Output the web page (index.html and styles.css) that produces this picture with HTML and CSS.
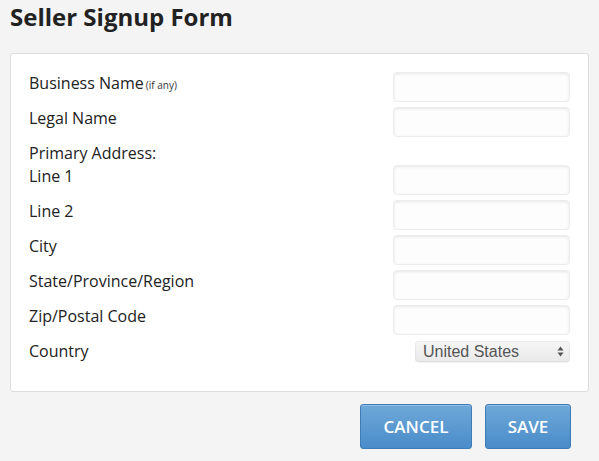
FILE: index.html
```html
<!DOCTYPE html>
<html>
<head>
<meta charset="utf-8">
<link rel="stylesheet" href="styles.css">
</head>
<body>
<h1 class="title">Seller Signup Form</h1>
<form class="panel">
  <div class="row">
    <label class="label">Business Name<small class="hint">(if any)</small></label>
    <input class="field" type="text">
  </div>
  <div class="row">
    <label class="label">Legal Name</label>
    <input class="field" type="text">
  </div>
  <div class="row row-heading">
    <span class="label">Primary Address:</span>
  </div>
  <div class="row">
    <label class="label">Line 1</label>
    <input class="field" type="text">
  </div>
  <div class="row">
    <label class="label">Line 2</label>
    <input class="field" type="text">
  </div>
  <div class="row">
    <label class="label">City</label>
    <input class="field" type="text">
  </div>
  <div class="row">
    <label class="label">State/Province/Region</label>
    <input class="field" type="text">
  </div>
  <div class="row">
    <label class="label">Zip/Postal Code</label>
    <input class="field" type="text">
  </div>
  <div class="row">
    <label class="label">Country</label>
    <div class="select">
      <span class="select-text">United States</span>
      <svg class="select-arrows" width="7" height="11" viewBox="0 0 7 11"><path d="M3.5 0.5 L6.5 4.5 L0.5 4.5 Z M0.5 6.5 L6.5 6.5 L3.5 10.5 Z" fill="#555"/></svg>
    </div>
  </div>
</form>
<div class="actions">
  <button class="btn btn-cancel" type="button">CANCEL</button>
  <button class="btn btn-save" type="button">SAVE</button>
</div>
</body>
</html>
```
FILE: styles.css
```css
html, body {
  margin: 0;
  padding: 0;
}
body {
  background: #f4f4f4;
  font-family: "Open Sans", "DejaVu Sans", sans-serif;
  color: #222;
  width: 599px;
  height: 461px;
  overflow: hidden;
}
.title {
  margin: 0;
  padding: 0 10px;
  font-size: 24px;
  font-weight: 700;
  line-height: 34px;
  color: #222;
}
.panel {
  margin: 19px 10px 0;
  background: #fff;
  border: 1px solid #dcdcdc;
  border-radius: 3px;
  padding: 18px 18px 29px;
  display: flex;
  flex-direction: column;
  gap: 5px;
}
.row {
  display: flex;
  justify-content: space-between;
  align-items: flex-start;
}
.row-heading {
  height: 18px;
}
.label {
  font-size: 16px;
  line-height: 22px;
  color: #222;
  white-space: nowrap;
}
.hint {
  font-size: 10px;
  margin-left: 2px;
  color: #333;
}
.field {
  box-sizing: border-box;
  width: 177px;
  height: 30px;
  margin: 0;
  border: 1px solid #ececec;
  border-radius: 4px;
  background: #fdfdfd;
  box-shadow: inset 0 1px 3px rgba(0, 0, 0, 0.09);
  outline: none;
}
.select {
  box-sizing: border-box;
  width: 155px;
  height: 21px;
  margin-top: 1px;
  border-radius: 4px;
  background: linear-gradient(#f6f6f6, #e9e9e9);
  box-shadow: inset 0 0 0 1px rgba(0, 0, 0, 0.04), 0 1px 1px rgba(0, 0, 0, 0.06);
  display: flex;
  align-items: center;
  justify-content: space-between;
  padding: 0 6px 0 8px;
}
.select-text {
  font-family: "Liberation Sans", Arial, sans-serif;
  font-size: 16px;
  color: #555;
  line-height: 21px;
}
.select-arrows {
  display: block;
}
.actions {
  display: flex;
  justify-content: flex-end;
  gap: 13px;
  padding: 12px 28px 0 0;
}
.btn {
  box-sizing: border-box;
  height: 45px;
  border: 1px solid #3f7cb5;
  border-radius: 3px;
  background: linear-gradient(#6ea8d9, #4a8cc9);
  color: #fff;
  font-family: "Open Sans", sans-serif;
  font-weight: 600;
  font-size: 17px;
  padding: 0;
  box-shadow: inset 0 1px 0 rgba(255, 255, 255, 0.25);
}
.btn-cancel {
  width: 112px;
}
.btn-save {
  width: 86px;
}
```
